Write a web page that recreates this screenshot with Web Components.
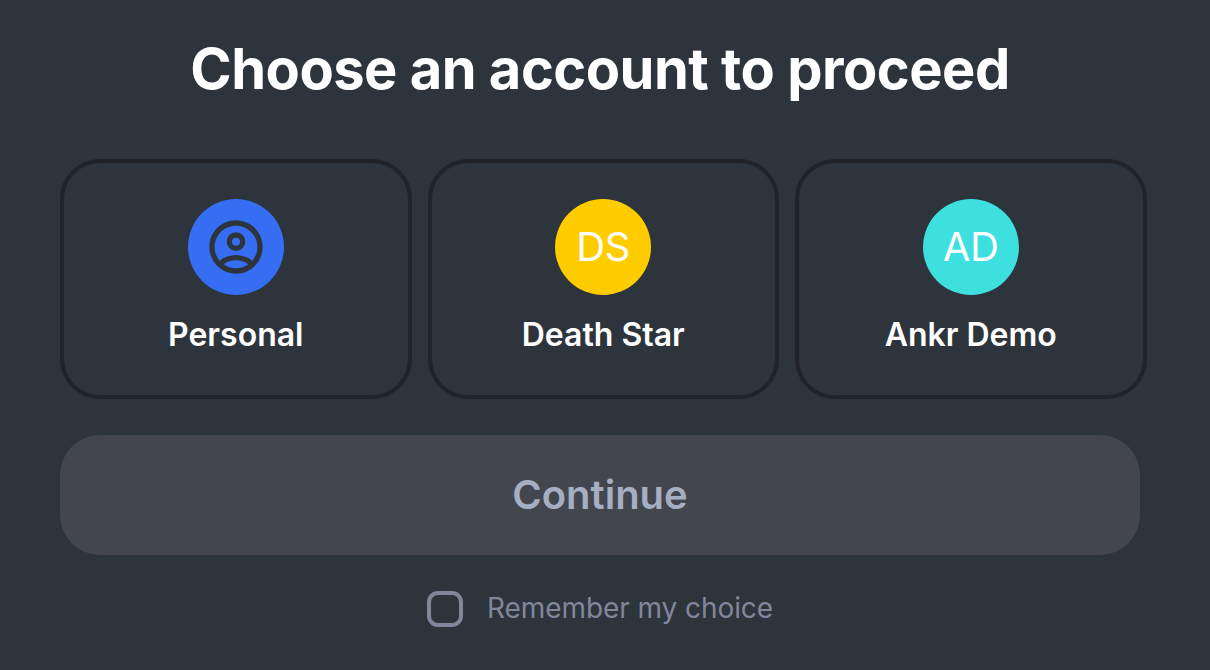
<!DOCTYPE html>
<html lang="en">
<head>
<meta charset="utf-8">
<title>Choose an account</title>
<style>
html,body{margin:0;height:100%;background:#2e343c}
body{font-family:Inter,"Liberation Sans",sans-serif;color:#fff;overflow:hidden}
</style>
</head>
<body>
<account-chooser></account-chooser>
<script>
const define = (name, html) => {
  const t = document.createElement('template');
  t.innerHTML = html;
  customElements.define(name, class extends HTMLElement {
    constructor() {
      super();
      this.attachShadow({mode: 'open'}).append(t.content.cloneNode(true));
    }
  });
};

define('user-icon', `
<style>:host{display:block;width:64px;height:64px}svg{display:block;width:100%;height:100%}</style>
<svg viewBox="0 0 24 24" fill="#2e343c" fill-rule="evenodd">
<path d="M12 2C6.48 2 2 6.48 2 12s4.48 10 10 10 10-4.48 10-10S17.52 2 12 2zM7.35 18.5C8.66 17.56 10.26 17 12 17s3.34.56 4.65 1.5C15.34 19.44 13.74 20 12 20s-3.34-.56-4.65-1.5zM18.14 17.12C16.45 15.8 14.32 15 12 15s-4.45.8-6.14 2.12C4.7 15.73 4 13.95 4 12c0-4.42 3.58-8 8-8s8 3.58 8 8c0 1.95-.7 3.73-1.86 5.12z"/>
<path d="M12 6.5a3.5 3.5 0 1 0 0 7 3.5 3.5 0 0 0 0-7zM12 8.5a1.5 1.5 0 1 1 0 3 1.5 1.5 0 0 1 0-3z"/>
</svg>`);

define('user-avatar', `
<style>:host{display:flex;align-items:center;justify-content:center;width:96px;height:96px;border-radius:50%;background:var(--avatar);font-size:40px;line-height:48px;font-weight:400;letter-spacing:-.3px}</style>
<slot></slot>`);

define('account-card', `
<style>
:host{display:flex;flex-direction:column;align-items:center;gap:20px;box-sizing:border-box;height:240px;padding-top:36px;border:4px solid #202327;border-radius:40px}
.name{font-size:32px;line-height:40px;font-weight:600;white-space:nowrap}
</style>
<slot name="avatar"></slot><div class="name"><slot></slot></div>`);

define('continue-button', `
<style>
:host{display:block}
button{display:block;width:100%;height:120px;border:0;padding:0;border-radius:40px;background:#43464e;color:#a5aec2;font:600 40px/48px Inter,"Liberation Sans",sans-serif}
</style>
<button disabled><slot></slot></button>`);

define('check-option', `
<style>
:host{display:flex;justify-content:center;align-items:center;gap:24px;color:#82869a;font-size:28px;line-height:34px;font-weight:400;letter-spacing:-.07px}
.box{box-sizing:border-box;width:36px;height:36px;border:4px solid #82869a;border-radius:11px}
.label{padding-bottom:2px}
</style>
<span class="box" role="checkbox" aria-checked="false"></span><span class="label"><slot></slot></span>`);

define('account-chooser', `
<style>
:host{display:block;box-sizing:border-box;width:1200px;padding:33px 60px 0}
h1{margin:0;font-size:56px;line-height:72px;font-weight:700;letter-spacing:-.5px;text-align:center;white-space:nowrap}
.cards{display:grid;grid-template-columns:repeat(3,351.5px);gap:16px;margin-top:54px}
continue-button{margin-top:36px}
check-option{margin-top:36px}
</style>
<h1>Choose an account to proceed</h1>
<div class="cards">
<account-card><user-avatar slot="avatar" style="--avatar:#356df3"><user-icon></user-icon></user-avatar>Personal</account-card>
<account-card><user-avatar slot="avatar" style="--avatar:#ffcc00">DS</user-avatar>Death Star</account-card>
<account-card><user-avatar slot="avatar" style="--avatar:#3edfdf">AD</user-avatar>Ankr Demo</account-card>
</div>
<continue-button>Continue</continue-button>
<check-option>Remember my choice</check-option>`);
</script>
</body>
</html>
